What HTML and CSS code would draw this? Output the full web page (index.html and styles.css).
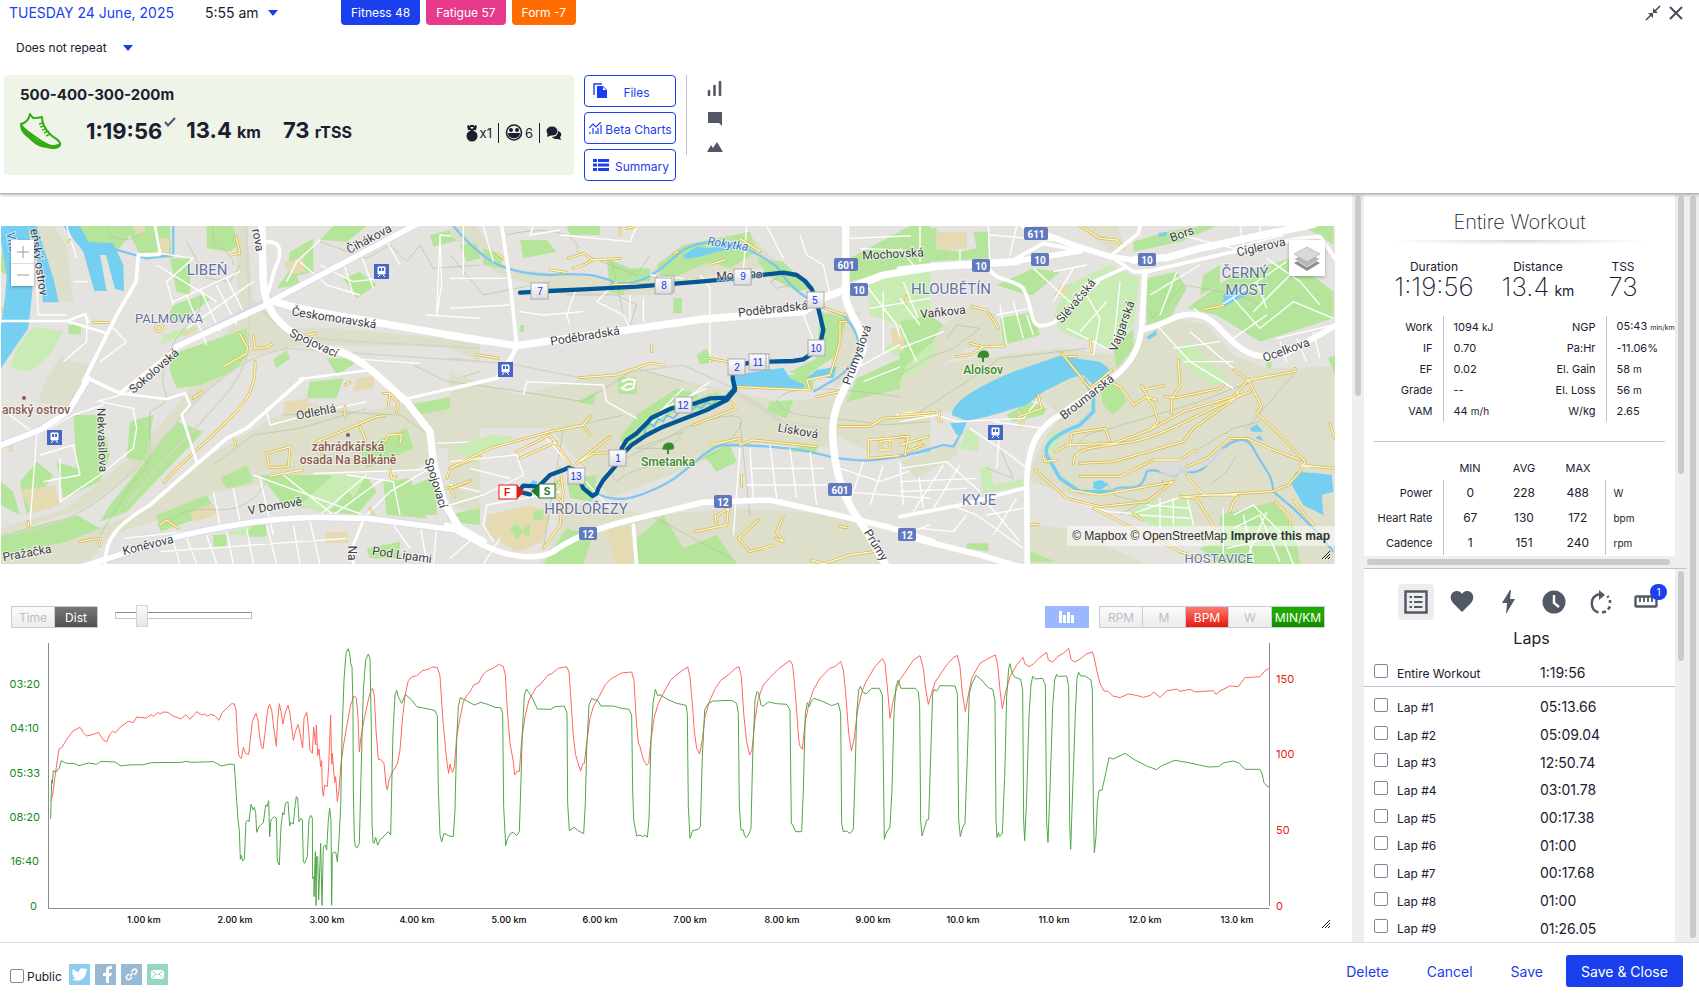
FILE: index.html
```html
<!DOCTYPE html>
<html lang="en">
<head>
  <meta charset="UTF-8" />
  <meta name="viewport" content="width=device-width, initial-scale=1" />
  <title>500-400-300-200m</title>
  <link rel="stylesheet" href="styles.css">
</head>
<body>

<header class="top">
  <div class="top-row">
    <a class="date" href="#">TUESDAY 24 June, 2025</a>
    <button class="time">5:55 am <i class="caret"></i></button>
    <div class="badges">
      <span class="badge fitness">Fitness 48</span>
      <span class="badge fatigue">Fatigue 57</span>
      <span class="badge form">Form -7</span>
    </div>
    <div class="window-buttons">
      <button aria-label="Collapse"><svg width="16" height="16" viewBox="0 0 16 16"><path d="M1 15L6 10M15 1L10 6" stroke="#4a4e5c" stroke-width="1.6"/><path d="M3 8h5v5zM8 3v5h5z" fill="#4a4e5c"/></svg></button>
      <button aria-label="Close"><svg width="14" height="14" viewBox="0 0 14 14"><path d="M1 1L13 13M13 1L1 13" stroke="#4a4e5c" stroke-width="2"/></svg></button>
    </div>
  </div>
  <button class="repeat">Does not repeat <i class="caret"></i></button>

  <div class="summary-row">
    <section class="card">
      <h1>500-400-300-200m</h1>
      <div class="card-line">
        <svg class="shoe" width="42" height="38" viewBox="0 0 42 38"><path d="M1 12C5 11 9 8 10 2l3 4c4 0 6 0 9-1 0 6 3 12 8 17 3 4 10 5 10 10-1 3-8 3-12 1C16 27 12 22 4 17 2 15 1 14 1 12z" fill="none" stroke="#34ab10" stroke-width="2" stroke-linejoin="round"/><path d="M1 11c2 4 5 5 8 9 5 6 10 10 18 12 5 2 9 1 14-1 1 6-8 7-14 5C16 35 12 29 7 25 2 21-1 17 1 11z" fill="#34ab10"/><path d="M19 12l4-1M20 15l4-1M22 18l4-1M24 21l4-2M26 24l4-2" stroke="#34ab10" stroke-width="1.4"/></svg>
        <b class="num dur">1:19:56</b>
        <svg class="tick" width="12" height="10" viewBox="0 0 12 10"><path d="M1 5L4 8.500L11 1" fill="none" stroke="#4a5568" stroke-width="2"/></svg>
        <b class="num">13.4 <small>km</small></b>
        <b class="num tss">73 <small>rTSS</small></b>
        <div class="meta">
          <span><svg width="12" height="18" viewBox="0 0 12 18"><circle cx="6" cy="12" r="5.500" fill="#1b2030"/><path d="M2 1.500L6 7L10 1.500M2 1.500L3 6M10 1.500L9 6M4 2h4" fill="none" stroke="#1b2030" stroke-width="2"/></svg>x1</span>
          <span><svg width="18" height="17" viewBox="0 0 18 17"><circle cx="9" cy="8.500" r="7.500" fill="none" stroke="#1b2030" stroke-width="1.600"/><circle cx="6" cy="6" r="2" fill="#1b2030"/><circle cx="12" cy="6" r="2" fill="#1b2030"/><path d="M3 9H15C15 16 3 16 3 9z" fill="#1b2030"/></svg> 6</span>
          <span><svg width="16" height="14" viewBox="0 0 16 14"><ellipse cx="6" cy="5" rx="5.500" ry="4.500" fill="#1b2030"/><path d="M1 11L2 6L6 9z" fill="#1b2030"/><path d="M12 5c4 1 4 5 2 6l1 3-3-1c-2 0-5 0-6-2 4 0 6-3 6-6z" fill="#1b2030"/></svg></span>
        </div>
      </div>
    </section>
    <div class="actions">
      <button><svg width="15" height="16" viewBox="0 0 15 16"><path d="M1 12V1H9" fill="none" stroke="#1a40ed" stroke-width="1.400"/><path d="M4 3h6l4 4v8H4z" fill="#1a40ed"/><path d="M10 4v3h3z" fill="#fff"/></svg><span>Files</span></button>
      <button><svg width="13" height="12" viewBox="0 0 13 12"><path d="M0 6L4 2L7 5L12 0M1 12V10M4 12V6M7 12V9M9 12V6M12 12V3" fill="none" stroke="#1a40ed" stroke-width="1.200"/></svg><span>Beta Charts</span></button>
      <button><svg width="16" height="13" viewBox="0 0 16 13"><path d="M0 0h4v3H0zM5 0h11v3H5zM0 4.500h4v3H0zM5 4.500h11v3H5zM0 9h4v3H0zM5 9h11v3H5z" fill="#1a40ed"/></svg><span>Summary</span></button>
    </div>
    <nav class="views">
      <button aria-label="Charts"><svg width="15" height="16" viewBox="0 0 15 16"><path d="M2 15V11M7.500 15V6M13 15V2" stroke="#525866" stroke-width="2.600" stroke-linecap="round"/></svg></button>
      <button aria-label="Comments"><svg width="16" height="16" viewBox="0 0 16 16"><path d="M1 1h14v14l-3-3H1z" fill="#525866"/></svg></button>
      <button aria-label="Map"><svg width="16" height="10" viewBox="0 0 16 10"><path d="M0 10L4 3L6 6L10 0L16 10z" fill="#525866"/></svg></button>
    </nav>
  </div>
</header>

<main>
  <div class="left">
    <div class="map">
      <svg class="map-art" viewBox="0 0 1334 338">
        <rect width="1334" height="338" fill="#e5e3e0"/>

        <!-- west -->
        <g transform="translate(-1 -11) scale(.33333)">
          <path class="wood" d="M180 425L265 450L215 590L115 560L140 490zM3 960L250 880L400 780L560 590L720 430L900 390L1340 395L1440 440L1440 380L1000 340L860 340L760 250L740 33H700L720 300L640 400L540 560L400 720L200 880L3 940zM600 740L900 560L1080 590L1240 560L1440 570V700L1320 700L1240 770L940 775L660 830L500 910L330 960L260 1047H3V990L260 950L420 890zM110 33H160L200 90L220 260L180 260zM1340 620L1440 560V900L1350 870z"/>
          <path class="park" d="M200 33H510L515 130L420 120L390 60L350 110L300 90L260 100zM510 130H570V240L530 230zM620 33H700L712 90L690 110L620 100zM520 270L620 235L630 255L540 320L500 315zM510 420L740 340L745 420L700 470L600 510L530 520L510 470zM205 330h38v28h-38zM220 600L300 600L330 720L300 800L190 850L170 740L230 760zM60 800L110 740L160 780L80 900zM530 620L610 650L380 890L300 920L330 870zM870 110L940 70L940 170L860 190zM1000 33L1100 33L1040 80L960 75zM1290 60L1350 45L1380 75L1300 95zM830 220L880 150L900 210zM1080 170L1130 210L1070 250L1030 190zM3 800L40 830L60 900L3 870zM3 960L230 900L300 940L200 980L3 1020zM470 900L620 840L650 890L480 950zM930 500L1030 490L1010 550L920 550zM1080 700L1220 640L1240 700L1100 760zM660 790L740 750L760 800L680 820zM780 780H1100L1130 830L1070 900L850 870zM1150 800L1230 790L1280 910L1160 900zM1220 820L1310 780V900L1240 900zM640 960h40v35h-40zM740 930h60v35h-60zM1100 1000L1200 980V1030H1110zM1230 570L1350 545L1360 580L1250 600zM390 620L460 600L440 740L380 730zM3 110L60 150L40 190L3 170zM1340 900L1440 880V930L1350 920zM820 435L860 405L870 430L830 460zM980 430L1090 430L1010 480z"/>
          <path class="grass" d="M100 335L190 350L150 420L90 470L30 460L50 400zM660 960L760 930L740 960zM480 390L600 340L580 330L490 360zM900 870L1000 780L1080 790L980 900zM1010 780L1100 780L1060 850z"/>
          <path class="field" d="M480 70H510L505 120H480zM850 145L910 125L915 170L870 180zM60 825L165 810L180 870L100 895zM545 350L590 335V350L550 365zM1070 490L1125 480L1120 520L1060 530zM855 560L925 550V590L850 590zM975 950h70v35h-70zM570 890L640 865L650 900L580 920zM400 33H435V55H405z"/>
          <path class="water" d="M3 33H85L100 150L97 230L85 340L50 390L3 460V330L15 250L20 180L3 80zM85 33L110 33L135 110L160 190L177 262H128L125 190zM190 33H240L265 80L340 85L370 150L372 228L345 222L318 120L300 120L320 228L283 228L250 110z"/>
          <path class="stream" d="M520 33V120L440 130L300 90M1360 33L1440 110"/>
          <path class="contour" d="M320 40C330 80 400 85 430 50M560 80L620 190L690 200L720 150M600 240C620 320 520 320 490 470C480 560 540 540 450 590C440 700 480 720 400 800L300 960M640 33C620 100 700 100 700 150M960 80L1100 130L1170 90L1220 140L1260 90L1300 160L1440 150M850 600L1000 590L1200 600L1290 660M640 750L760 660L900 640L1100 580M1240 450L1340 500L1440 470M500 930C600 820 700 960 800 800"/>
          <path class="rail" d="M3 960C300 930 400 760 560 590C680 460 760 420 860 400L1440 440M740 33C740 200 760 300 740 430C700 560 500 700 380 870M790 290C880 390 960 370 1440 400"/>
          <path class="minor" d="M200 33L230 130M220 200H265M110 210L115 300H200M480 115L580 130L500 200L520 270M470 150L650 260M560 240L620 390M600 220L660 350M650 210L710 330M680 190L740 310M520 260L720 170M560 340L760 200M300 440L380 380L330 330M290 560L400 530M260 310V380L190 440M3 580L110 660L220 600L310 570M110 660L90 930M180 730L180 860L300 780L400 700L410 640L400 580L300 560M120 720L220 690L240 780L130 800M860 200L890 140L960 75M900 140L980 210L1080 240M960 150L1060 200L1140 190M1030 140L1060 240M1080 110L1120 220M930 190L1020 150L1110 100M1160 80L1200 150M1320 60L1325 210L1310 300L1320 60L1440 70M1280 300L1440 310M1040 430L1260 445M800 590L810 630L960 590L1100 560M780 790L820 960M940 775L1260 765L1300 740M760 780L1090 900M850 780L1000 900M960 900L1100 780M1000 900L1150 790M1100 900L1170 830L1290 760M1040 780L1180 800L1200 900M640 830L660 930M700 820L720 920M370 970L650 940M520 980L540 1047M560 970L590 1047M620 960L650 1047M680 950L700 1047M740 940L760 1047M800 930L830 1047M880 930L900 1047M930 920L960 1047M480 1010L1040 970M1260 930L1280 1040M1310 940L1300 1047M1180 930L1230 1000M1310 685L1440 680M1350 810L1440 830"/>
          <g class="path"><path id="tracks-w" d="M690 120L720 115L708 65M280 322H325M670 455L740 415L742 395L718 355M760 365L765 400L800 398L815 388M765 440C770 520 740 560 680 620L520 770L492 803M580 550L605 530M920 360L948 355M950 680L1130 605L1155 602M1080 635L1097 675M1035 575V605M1150 535L1170 535L1195 565L1190 590M1170 535L1165 570M1155 680L1165 660L1205 658L1200 685M800 715L870 695L865 755L808 758L800 715M810 783L908 765M960 680L965 720M1035 510L1050 502M1340 790L1350 760L1440 725M1330 820L1370 815L1410 797M1350 820L1365 845M480 930L500 915L535 940M240 980L295 970L300 992M700 668L708 690M3 290V280M30 690L33 705M210 75L205 80M85 920V935M1170 765L1175 790L1188 785M1110 880L1120 898M466 340A11 11 0 1 0 466 338"/></g>
          <use class="path-in" href="#tracks-w"/>
          <g class="casing"><path d="M240 1060L420 1000L530 965C700 925 850 907 960 907L1100 910L1370 945M830 250L1250 28M3 690L120 645L205 590L265 490M530 395L820 250"/></g>
          <path class="road w-s" d="M1090 915L1060 990V1047M1225 550L1440 500M3 318H200L255 298L265 320M200 318L320 355M480 115L465 33M360 535L500 552L555 535L570 570L545 600L590 740M900 492L1110 465"/>
          <path class="road w-m" d="M478 118L415 120L408 200L350 300L250 500M315 1047C315 970 350 930 450 870L530 800L680 670L740 640L910 490M265 490L360 535L530 400M800 80C850 80 845 120 825 160L805 230"/>
          <path class="road w-l" d="M230 1060L420 1000L530 965C700 925 850 907 960 907L1100 910L1370 945M830 250L1250 28M3 690L120 645L205 590L265 490M530 395L820 260"/>
          <path class="road w-xl" d="M785 33L790 200C795 280 830 320 880 355L960 400L1020 410C1080 430 1120 470 1220 560L1290 650L1300 740L1330 860L1380 940L1450 980M820 258C900 285 1000 300 1130 322L1450 378"/>
        </g>

        <!-- centre -->
        <g transform="translate(449 -11) scale(.33333)">
          <path class="wood" d="M0 470L200 540L540 460L720 500L850 530L1000 560L1180 540L1160 700L870 680L760 740L480 850L420 780L300 640L0 640zM320 860L620 900L860 880L1200 900L1260 980L1290 1047H270L330 930zM0 33H80L170 160L560 200L700 90L900 60L990 150L780 180L620 240L350 240L150 180L0 60zM1190 520H1440V700L1290 730L1160 660zM1130 290L1230 290L1220 480L1150 520z"/>
          <path class="park" d="M210 75H290L320 110L220 130zM505 160H600V200L505 195zM100 100L155 120V160L100 150zM30 90L80 85L90 130L50 140zM350 33H450V60H360zM620 150L700 90L900 50L920 110L840 160L780 140L640 200zM920 130L1000 140L1080 220L1040 230L950 180zM1110 290L1190 310L1160 420L1060 490L1020 470L1100 430zM1200 130L1380 33H1440V160L1380 150L1200 200zM1220 490L1440 390V500L1190 560zM560 600L680 520L750 540L660 600L520 700L510 670zM690 570L800 530L830 560L720 590zM760 720L840 690L860 740L800 770zM350 790L440 780L430 860L360 850zM560 970L640 900L700 1000L800 960L860 1047H560zM380 560L440 530L430 570zM670 250h26v45h-26zM470 130L540 160L520 240L480 230zM990 480H1090V520H1000zM1020 700L1100 690V710L1020 710zM505 487h55v50h-55zM740 420L770 400L790 440L750 450zM270 830L330 790L320 830zM350 940L430 960L400 1047H280zM960 560L1030 555L1010 610L950 590zM210 330L222 330L222 350L208 350z"/>
          <path class="grass" d="M1250 200L1440 160V300L1340 330L1260 300zM1300 400L1440 310V480zM0 700L120 660L200 665L60 730z"/>
          <path class="field" d="M110 900L240 870L300 900L280 980L200 1010L110 960zM470 950L540 930L550 1047H500zM1320 340L1380 340L1370 390L1330 395z"/>
          <path class="park" d="M180 940L200 925L220 950L200 975zM220 940L240 925V960L225 965zM250 890L280 880V915H250z"/>
          <path class="water" d="M700 120L740 95L780 100L840 85L890 95L800 110L750 125L705 132zM850 480L1000 458L1020 490L1065 510L1055 525L850 515zM1070 490L1100 465L1160 455L1150 490L1110 485L1070 500zM235 810L250 795L262 800L255 815z"/>
          <path class="stream" d="M10 33C100 140 160 175 300 180C430 170 470 190 500 205C600 210 640 150 700 105C780 60 880 80 980 155C1020 220 1080 270 1180 300C1250 380 1240 430 1160 490L1090 530M430 830C500 870 560 850 640 810C720 770 760 700 820 690C1000 690 1080 710 1140 725C1260 750 1320 730 1440 705"/>
          <path class="contour" d="M0 120L100 240L300 200M170 60C330 20 400 80 380 110L560 180L600 120M350 240L500 240L560 270L540 330M480 130L500 200L520 300M0 500L150 520L400 560L560 460L700 500M280 1000L340 640L520 600M500 800C440 740 620 700 700 640C860 580 900 600 860 650C760 800 620 700 500 800M1440 560C1200 520 1000 500 980 560C1020 620 1140 600 1300 630L1440 620M960 200L1000 180L1020 210L980 220L960 200M560 700L700 650L660 700zM600 900L860 1040M870 620L900 900"/>
          <path class="rail" d="M0 430L200 450L400 490L700 450L850 520L1000 620L1110 680M850 530L990 620L1120 640"/>
          <path class="minor" d="M0 190H170M40 33V180M100 33L130 140M250 33L240 60L330 45M560 33L540 80L330 60M0 280L180 270M210 290L280 300L400 290M380 220L350 300L360 330M500 200L440 260L520 300L540 340M540 240V320M580 250V320M750 180L780 220V440M600 180L700 190M890 33L880 170M950 33L1000 130M1050 60L1070 120L1120 150L1140 240M1060 300L1100 400M1200 70L1440 60M1230 100L1440 110M1240 200L1340 330L1380 480M1260 280L1440 250M1300 230V420M1360 200L1440 400M1200 470L1440 340M1240 500L1440 420M220 540L230 500L460 510L470 560L560 610M510 690L640 600L780 500M600 620L700 520M640 580L770 520M130 980L100 930L110 870L330 830M0 740L200 720L220 780L100 840L0 870M60 760L180 790M280 660L380 770L480 880M870 700L850 960M900 700L910 850M960 690L980 850M1020 700L1040 850M1080 710L1100 870M900 760H1120M890 810H1130M1170 760L1290 800L1400 760M1240 740L1200 860M1300 750L1260 870M1350 740L1360 870M1400 740L1420 880M1180 830L1440 850M1340 600L1440 580M0 1030L80 960M100 1047L150 970M1360 960L1440 930"/>
          <g class="path"><path id="tracks-c" d="M355 130L400 115L430 135L510 130M370 160L400 150L430 135M300 165L350 172M490 208L590 208M140 115L160 130M870 70L930 110M510 60L510 40M530 40L555 35M670 115L685 110M780 148L825 135M1125 280L1190 302M1170 320L1170 380L1150 450L1140 480L1070 495L1080 525L860 515M1190 320L1170 320M780 430L830 440L860 450M390 488L500 480L600 445L640 450M605 390V410M80 418L145 430M0 760L120 700L300 650L400 630L420 605M400 630L420 660M200 710L300 660L370 760M380 745L480 665M210 730L320 680M390 740L430 715L500 712M330 760L340 830L330 930L280 1000M330 800L310 830L350 880M730 630L860 580L840 560M780 690L870 670V690L910 675L1100 695M875 780V815M735 950L830 930L835 880L795 905L800 925M865 970L925 915M865 970L900 1010L970 990M1000 905L980 950L1000 980L975 970M1100 545L1170 530M1165 635L1260 635L1300 610L1440 600M1255 675L1370 665V720L1255 730zM1290 680L1320 675V705L1290 705zM1370 710L1420 690M1085 1035L1120 1047L1200 1020L1270 1010M1170 935L1190 938M0 820L60 798"/></g>
          <use class="path-in" href="#tracks-c"/>
          <path d="M515 500L535 492L555 495L550 520L530 525L515 520L530 508L548 506" fill="none" stroke="#fff" stroke-width="6"/>
          <path d="M585 640L600 625L612 635L625 610L640 620L650 600L670 610L690 590M720 590L740 572L752 580L770 562L785 570L800 555M585 640V660" fill="none" stroke="#78bdf0" stroke-width="5"/>
          <path class="road w-m" d="M155 33L180 200L200 390L180 440M0 522L140 490L200 400M550 930L560 1047M0 900L20 950"/>
          <path class="road w-l" d="M-10 930L100 990C180 1030 260 1035 310 1010C360 975 420 945 540 915L760 862L960 855L1160 900L1310 935L1450 980"/>
          <path class="road w-xl" d="M-10 360L200 392L530 345L760 312L1060 290L1130 245L1300 180L1440 158"/>
          <path class="road w-xl" d="M1187 33V250C1200 310 1240 330 1240 400C1210 500 1150 540 1148 650C1150 760 1180 840 1210 890L1250 950L1310 1055"/>
          <path class="route" d="M210 233L297 228L400 223L560 215L750 200L880 188L950 178L1000 173L1040 180L1065 198L1085 222L1100 260L1112 310L1120 345L1112 380L1095 410L1060 433L1030 438L960 440L900 443L850 455L848 490L855 525L830 555L770 585L700 612L640 635L590 660L545 690L520 715L495 755L460 795L445 820L440 835L428 843L400 820L375 765L355 758L340 765L300 780L280 800L265 815L220 812L205 830L240 838M848 490L855 520L830 548L780 550L730 567L665 580L605 608L590 625L560 655L530 675L515 700V720"/>
        </g>

        <!-- east -->
        <g transform="translate(899 -11) scale(.33333)">
          <path class="wood" d="M0 500L160 440L480 400L640 420L720 360L830 310L920 330L1000 420L1100 460L1300 455V1047H1000L900 990L700 900L390 800L380 930L500 940L740 1047H380L370 800L430 680L480 600L420 550L280 600L150 590L0 590zM130 330L220 270L290 300L310 390L200 400L100 470L0 530V450zM0 740L180 680L170 720L50 790zM540 33H650L680 100L630 110z"/>
          <path class="park" d="M30 40L110 40V100L180 110L230 100L220 50L265 50V130L0 145V105H40zM290 210L400 160L480 170L400 240L380 240zM300 310L400 290L420 360L310 390zM740 190L830 170L860 220L810 310L740 330zM860 280L1000 180L1170 130L1300 230V310L1080 380L950 300zM910 180L960 150L960 210L900 240zM640 400L700 340L700 400L650 460zM600 520L650 500L680 560L640 600L610 570zM320 600L390 560L440 580L430 600L340 620zM960 900L1120 860L1180 930L1200 1047H960L900 1000L960 980zM0 320L90 300L130 330L60 440L0 500zM700 80L800 50L900 33H950L840 80L700 110zM1200 33L1300 33V90L1260 60zM1285 430L1305 420V480zM1100 440h14v20h-14zM390 1010L470 1040H390zM200 985H265V1010L200 1000z"/>
          <path class="grass" d="M500 210L630 150L720 190L700 330L620 400L480 350L460 300zM830 410L870 380L990 500L940 510L850 450zM180 700L200 640L235 660V710zM240 760L270 750L280 810L370 790V815L250 835zM440 660L510 640L460 700L450 720zM680 900L740 860L870 850L880 930L780 940zM20 450L110 370L90 440L0 500z"/>
          <path class="field" d="M108 50L200 50L200 100L115 105zM0 350L15 360L10 410L0 410zM480 210L510 210L500 240L460 245zM355 590L375 600V635L352 640z"/>
          <path class="water" d="M155 600C160 560 220 520 340 470L480 422L540 432L600 440L625 460L630 480L580 510L550 480L510 490L430 530L380 570L260 605L200 618zM150 625L200 622L185 660L170 660zM970 240L1010 215L1050 235L970 275zM775 55L800 50V62L778 65zM740 365L770 345V360L745 375zM1170 800L1190 770L1250 775L1295 780L1300 830L1265 840L1270 900L1210 870zM580 800L605 795L625 810L600 825L580 820zM1050 640L1070 628L1090 650L1055 650zM1065 670L1080 660L1090 678zM780 808L790 793V808zM830 780L840 755L855 770z"/>
          <path class="stream-w" d="M550 490L580 540V590L540 630C460 660 430 690 440 720L480 790L540 830L640 830"/>
          <path class="stream" d="M640 825C680 800 720 850 740 770C790 750 800 810 850 765C900 790 930 740 960 710C1000 670 1040 660 1060 700C1090 760 1120 780 1120 830L1180 880L1250 950L1300 1010M0 725L60 710L130 690L160 695L180 660"/>
          <path class="contour" d="M0 480L80 430L160 400L240 340L170 330L140 370M60 590L200 500L300 430L560 400M260 760L340 790L300 700M520 700L560 660L700 620L900 560L1000 520L1060 500M660 900L800 820L900 700L1000 640L1080 620M930 810L980 770L1010 720M1180 480L1040 640M730 270L760 310L850 210L1020 240L1080 270M620 800L640 840L800 880"/>
          <path d="M760 750L880 710L980 700L960 740L800 790z" fill="#dcdcd8" opacity=".8"/>
          <path class="minor" d="M0 100L40 150M60 33V140M180 105V150M265 33L270 150M350 33L330 120M270 60L500 80M560 150L460 170M400 160L520 270L600 200M520 160L460 260M560 240L600 310L580 420M620 260L540 350M660 200L640 400M500 340L620 400M300 270L320 390M340 260L370 370M380 300L400 360M290 300L390 280M0 400L130 350M0 250L60 330M0 330L50 440M0 620L110 600L170 620L370 610L410 560M300 640L290 760M280 620L430 640M210 640L330 720L380 760M0 760L140 740L240 830M0 800L230 790M40 890L130 750M100 880L180 750M0 830L200 820M150 870L230 900L370 1000M200 900L160 950L60 940M250 850L360 980M260 900L370 880M280 960L350 850M770 330L870 440L1000 520M870 350L1000 460M820 400L960 380M850 440L1000 440M1100 300L1000 370L880 280M1000 250L1080 340L1180 260L1300 310M1070 200L1100 280M950 280L1160 140M1060 290L1210 140M1100 130L1200 200L1260 270M750 240L900 150M780 300L830 170M840 60L1000 100L1150 60M1020 33L1030 90M1080 33V80M1130 370L1300 330M1140 380L1160 440M1190 370L1220 440M1240 350L1260 430M700 895L860 840L880 930M780 850V940M820 850V930M740 870L870 880M720 900L870 910M970 880V1040M1000 900L1060 870L1140 950L1180 1047M1000 940L1080 900L1140 1040M1030 900L1060 1040M1100 890L1040 1030M980 1000L1150 960M550 865L620 890L700 895"/>
          <g class="path"><path id="tracks-e" d="M215 275L260 285L295 340M170 425L215 418L250 395L315 393M210 385L250 395M570 375L575 410M485 415L570 520L635 465M505 425L530 425M640 505L665 520L700 570L740 545L760 570L775 620L750 645M725 510L750 560M730 525L790 512M740 545L770 555M835 435L840 515L815 550V595M795 545L830 548L960 520L970 510M465 710L500 690L640 685L750 645L850 590L1000 545L1045 495M520 745C520 700 560 700 700 680C800 660 900 590 1050 530M540 745L640 740L850 680L880 640L1020 540M510 690L515 655L615 640L630 680M1000 465L1045 495L1185 470V460M1045 495L1085 575L1070 595L1110 630L1150 670L1215 740L1200 770L1165 810L1115 830L850 845M1015 530V545M860 755L920 730L990 670L1040 670L1120 705L1200 735M1200 750L1305 760M540 785L660 785L760 735L840 735L885 705M510 825L600 840L820 800M405 765L500 850L600 875L740 860L820 800M580 880L840 1010L960 1047M0 600L105 593M120 590L115 615L125 620M0 665L25 665L15 720M0 690L85 665M60 680V695M355 605L425 580L415 540M385 928H415M840 845L890 850L945 940M860 780L910 840H1010M990 890L1000 860L1015 845M1125 860L1170 905V935M1180 855L1240 930M910 283L970 272M540 33L600 70L650 75L670 100M430 725L435 740L470 735M700 895L725 915M1290 625L1305 670M18 245V265"/></g>
          <use class="path-in" href="#tracks-e"/>
          <path class="road w-m" d="M270 165C290 200 340 190 370 220C400 280 390 330 420 332C470 330 470 310 500 290L560 210L670 160M630 125L715 55L720 33M635 125L700 170H740L1000 110L1200 70L1260 65L1305 130M340 135L430 85L530 105M0 905L180 870L370 820"/>
          <path class="road w-l" d="M735 170L725 340C715 420 670 470 620 500L480 600C410 640 385 690 380 800L382 1050M725 345C800 330 820 295 880 298C940 300 960 350 1010 390C1060 430 1100 430 1160 415L1230 375L1310 330M0 945L60 975L240 1020L360 1055"/>
          <path class="road w-l" d="M340 140L540 108M370 33L520 90L630 125L700 135"/>
          <path class="road w-xl" d="M0 165L100 155L350 140M700 135L800 128L900 100L1240 28"/>
        </g>

        <g class="street">
          <text transform="translate(153 145) rotate(-41)">Sokolovská</text>
          <text transform="translate(333 92) rotate(9)">Českomoravská</text>
          <text transform="translate(313 117) rotate(25)">Spojovací</text>
          <text transform="translate(368 13) rotate(-28)">Čihákova</text>
          <text transform="translate(257 14) rotate(80)">rova</text>
          <text transform="translate(38 36) rotate(82)">eňský ostrov</text>
          <text transform="translate(101 214) rotate(88)">Nekvasilova</text>
          <text transform="translate(315 186) rotate(-11)">Odlehlá</text>
          <text transform="translate(274 280) rotate(-10)">V Domově</text>
          <text transform="translate(435 257) rotate(73)">Spojovací</text>
          <text transform="translate(147 319) rotate(-14)">Koněvova</text>
          <text transform="translate(26 327) rotate(-10)">Pražačka</text>
          <text transform="translate(351 327) rotate(90)">Na</text>
          <text transform="translate(401 329) rotate(8)">Pod Lipami</text>
          <text transform="translate(892 28) rotate(-3)">Mochovská</text>
          <text transform="translate(724 50) rotate(-4)">Mo</text>
          <text transform="translate(755 48) rotate(4)">no</text>
          <text transform="translate(772 83) rotate(-6)">Poděbradská</text>
          <text transform="translate(584 110) rotate(-9)">Poděbradská</text>
          <text transform="translate(856 129) rotate(-70)">Průmyslová</text>
          <text transform="translate(797 205) rotate(10)">Lísková</text>
          <text transform="translate(875 319) rotate(58)">Průmy</text>
          <text transform="translate(942 86) rotate(-6)">Vaňkova</text>
          <text transform="translate(1075 75) rotate(-50)">Slévačská</text>
          <text transform="translate(1121 100) rotate(-70)">Vajgarská</text>
          <text transform="translate(1086 171) rotate(-38)">Broumarská</text>
          <text transform="translate(1181 8) rotate(-20)">Bors</text>
          <text transform="translate(1260 21) rotate(-13)">Cíglerova</text>
          <text transform="translate(1285 124) rotate(-20)">Ocelkova</text>
        </g>
        <g class="district">
          <text x="206" y="44">LIBEŇ</text>
          <text x="168" y="92" class="small">PALMOVKA</text>
          <text x="585" y="283">HRDLOŘEZY</text>
          <text x="950" y="63">HLOUBĚTÍN</text>
          <text x="1244" y="47">ČERNÝ</text>
          <text x="1245" y="64">MOST</text>
          <text x="978" y="274">KYJE</text>
          <text x="1218" y="332" class="small">HOSTAVICE</text>
        </g>
        <g class="place">
          <text x="35" y="184">anský ostrov</text>
          <text x="347" y="221">zahrádkářská</text>
          <text x="347" y="234">osada Na Balkáně</text>
          <circle cx="23" cy="172" r="2"/><circle cx="347" cy="209" r="2"/>
        </g>
        <g class="nature">
          <text x="667" y="236">Smetanka</text>
          <text x="982" y="144">Aloisov</text>
          <path d="M662 221c0-5 11-7 11 0 1 3-3 3-5 3v4h-2v-4c-3 0-6 0-4-3zM977 129c0-5 11-7 11 0 1 3-3 3-5 3v4h-2v-4c-3 0-6 0-4-3z"/>
        </g>
        <g class="river">
          <text transform="translate(727 18) rotate(8)">Rokytka</text>
          <text transform="translate(11 16) rotate(80)">Vlta</text>
        </g>

        <g class="shield">
          <rect x="833" y="32" width="24" height="13" rx="2"/><text x="845" y="39">601</text>
          <rect x="849" y="57" width="18" height="13" rx="2"/><text x="858" y="64">10</text>
          <rect x="827" y="257" width="24" height="13" rx="2"/><text x="839" y="264">601</text>
          <rect x="713" y="269" width="18" height="13" rx="2"/><text x="722" y="276">12</text>
          <rect x="578" y="301" width="18" height="13" rx="2"/><text x="587" y="308">12</text>
          <rect x="897" y="302" width="18" height="13" rx="2"/><text x="906" y="309">12</text>
          <rect x="1023" y="1" width="24" height="13" rx="2"/><text x="1035" y="8">611</text>
          <rect x="971" y="33" width="18" height="13" rx="2"/><text x="980" y="40">10</text>
          <rect x="1030" y="27" width="18" height="13" rx="2"/><text x="1039" y="34">10</text>
          <rect x="1137" y="27" width="18" height="13" rx="2"/><text x="1146" y="34">10</text>
        </g>

        <defs>
          <g id="station"><rect x="-7" y="-7" width="15" height="15" fill="#4765c4"/><path d="M-3 -4H4V3H-3zM-1 4L-3 6M2 4L4 6" fill="#fff" stroke="#fff"/><path d="M-2 -3H0V0H-2zM1 -3H3V0H1z" fill="#4765c4"/></g>
          <linearGradient id="face" x2="0" y2="1"><stop offset="0" stop-color="#fff"/><stop offset="1" stop-color="#dcdcdc"/></linearGradient>
          <rect id="pin" x="-8" y="-8" width="17" height="16" fill="url(#face)" stroke="#a9a9a9"/>
        </defs>
        <use href="#station" x="380" y="45"/><use href="#station" x="53" y="211"/>
        <use href="#station" x="504" y="143"/><use href="#station" x="994" y="206"/>

        <g class="pins">
          <use href="#pin" x="664" y="58"/><use href="#pin" x="759" y="136"/>
          <use href="#pin" x="538" y="65"/><text x="539" y="65">7</text>
          <use href="#pin" x="662" y="60"/><text x="663" y="59">8</text>
          <use href="#pin" x="741" y="51"/><text x="742" y="50">9</text>
          <use href="#pin" x="814" y="74"/><text x="814" y="74">5</text>
          <use href="#pin" x="815" y="122"/><text x="815" y="122">10</text>
          <use href="#pin" x="756" y="136"/><text x="757" y="136">11</text>
          <use href="#pin" x="735" y="141"/><text x="736" y="141">2</text>
          <use href="#pin" x="682" y="179"/><text x="682" y="179">12</text>
          <use href="#pin" x="616" y="232"/><text x="617" y="232">1</text>
          <use href="#pin" x="575" y="250"/><text x="575" y="250">13</text>
        </g>
        <g class="ends">
          <path d="M516 259L523 266L516 273z" fill="#e8190c"/><rect x="498" y="259" width="18" height="14" fill="#fff" stroke="#e8190c"/><text x="506" y="266" fill="#e8190c">F</text>
          <path d="M538 259L530 265L538 272z" fill="#1f7a2c"/><rect x="538" y="258" width="16" height="14" fill="#fff" stroke="#1f7a2c"/><text x="546" y="265" fill="#1f7a2c">S</text>
        </g>
      </svg>

      <div class="zoom">
        <button aria-label="Zoom in"><svg width="12" height="12" viewBox="0 0 12 12"><path d="M0 6H12M6 0V12" stroke="#999"/></svg></button>
        <button aria-label="Zoom out"><svg width="12" height="12" viewBox="0 0 12 12"><path d="M0 6H12" stroke="#999"/></svg></button>
      </div>
      <button class="layers" aria-label="Layers"><svg width="28" height="26" viewBox="0 0 28 26"><path d="M1 17L14 10L27 17L14 25z" fill="#8b8f94"/><path d="M1 13L14 6L27 13L14 21z" fill="#b4b7ba" stroke="#fff" stroke-width=".6"/><path d="M1 8L14 1L27 8L14 16z" fill="#d9dad8" stroke="#a6a9ab" stroke-width=".6"/></svg></button>
      <div class="credit"><a href="#">© Mapbox</a> <a href="#">© OpenStreetMap</a> <a href="#"><b>Improve this map</b></a></div>
      <svg class="grip" width="8" height="8" viewBox="0 0 8 8"><path d="M0 8L8 0M3 8L8 3M6 8L8 6" stroke="#222"/></svg>
    </div>

    <div class="chart-bar">
      <div class="switch"><button>Time</button><button class="dist">Dist</button></div>
      <input class="smooth" type="range" min="0" max="100" value="16" aria-label="Smoothing">
      <button class="bars" aria-label="Zones"><svg width="16" height="12" viewBox="0 0 16 12"><path d="M0 0h3v12H0zM4 4h3v8H4zM8 1h3v11H8zM12 4h3v8h-3z" fill="#fff"/></svg></button>
      <div class="switch series"><button>RPM</button><button>M</button><button class="bpm">BPM</button><button>W</button><button class="pace">MIN/KM</button></div>
    </div>

    <div class="chart">
      <svg class="chart-art" viewBox="0 0 1334 300">
        <g transform="translate(-1 -45) scale(.33333)">
          <path class="hr" d="M152 633L158 615L165 560L172 510L177 477L186 472L200 448L220 422L240 412L250 428L260 438L280 433L296 427L308 448L320 456L330 432L338 424L346 428L360 412L385 394L400 398L410 381L440 384L452 374L460 379L474 367L480 372L490 366L504 367L515 376L543 387L557 374L570 388L590 365L605 375L613 372L622 378L632 373L645 377L656 391L667 368L680 355L695 341L703 342L708 360L712 440L716 495L721 503L724 506L730 472L736 490L746 493L752 440L757 395L768 370L774 390L779 440L784 468L789 476L795 430L803 360L809 343L815 360L821 410L829 469L832 400L838 341L843 365L849 402L855 370L864 346L870 370L875 410L880 451L886 425L894 403L900 430L908 474L912 385L920 367L925 410L930 480L937 490L941 411L944 440L947 465L949 405L953 497L957 477L962 530L965 512L967 597L970 619L974 585L982 590L986 530L992 376L995 523L997 490L1001 540L1004 577L1007 560L1012 635L1017 600L1023 520L1030 470L1040 410L1052 345L1062 318L1069 324L1074 380L1078 486L1083 440L1092 390L1105 330L1113 300L1118 295L1123 320L1128 420L1135 508L1142 508L1152 520L1158 585L1162 600L1167 570L1178 545L1192 522L1200 480L1208 380L1215 320L1224 275L1235 261L1250 257L1268 242L1290 236L1295 231"/>
          <path class="speed" d="M152 687L155 570L157 580L160 542L168 546L178 534L184 512L200 520L222 520L237 527L265 519L290 523L302 514L345 516L363 528L385 525L430 524L455 518L545 517L558 514L575 517L640 515L665 528L690 522L703 524L708 600L714 690L718 720L721 808L724 795L728 813L733 808L738 695L744 690L747 695L753 643L760 660L763 652L767 668L770 727L777 710L790 698L797 645L801 650L806 632L809 740L813 690L823 680L829 684L832 815L838 825L843 710L848 668L852 675L856 640L864 635L869 708L872 697L880 702L886 640L889 620L893 624L897 695L903 685L907 690L910 815L914 820L922 800L927 690L932 676L937 684L938 866L942 860L942 920L946 785L948 946L950 800L953 800L956 930L962 760L966 946L970 770L976 765L980 780L985 690L989 655L993 690L995 946L997 790L1004 785L1008 790L1012 815L1017 750L1022 650L1026 440L1032 270L1038 190L1044 176L1049 190L1052 220L1056 230L1059 350L1060 600L1063 745L1066 770L1072 773L1078 760L1083 560L1090 300L1097 210L1105 192L1110 205L1114 420L1116 700L1119 757L1122 760L1127 742L1133 766L1140 750L1165 725L1172 735L1175 600L1179 430L1185 315L1190 301L1195 320L1205 340L1216 313L1235 330L1250 350L1270 354L1290 358"/>
        </g>
        <g transform="translate(429 -45) scale(.33333)">
          <path class="hr" d="M5 231L22 232L30 258L38 380L47 480L52 525L56 550L60 522L64 538L68 547L73 530L80 440L90 385L100 335L110 316L120 305L132 284L146 279L158 255L170 243L190 234L208 223L220 230L226 255L232 360L240 460L250 515L254 555L262 543L268 545L275 450L285 380L297 330L320 290L330 285L353 256L365 251L385 235L410 230L417 245L423 330L430 440L437 495L446 525L452 543L458 522L463 520L470 460L480 385L490 350L510 315L527 282L545 265L575 249L605 246L612 270L618 380L625 460L630 470L640 508L650 526L656 520L663 450L673 380L685 340L700 310L722 270L745 250L773 231L780 260L787 340L793 425L800 475L809 492L817 450L825 380L840 330L856 295L872 271L895 255L915 236L927 230L934 260L942 380L950 455L959 495L966 480L975 390L985 325L1000 285L1020 262L1050 233L1080 211L1088 225L1096 310L1104 420L1108 465L1117 478L1125 400L1137 340L1150 300L1170 265L1200 235L1215 230L1232 214L1240 240L1248 320L1256 430L1264 482L1272 450L1283 360L1296 305L1308 275L1335 230L1357 206L1365 220L1372 290L1380 385"/>
          <path class="speed" d="M0 358L15 362L22 378L25 600L30 735L35 755L42 730L55 737L70 740L75 660L80 450L85 350L91 323L105 330L133 345L152 337L170 342L195 352L212 353L218 370L221 650L227 767L233 745L242 730L250 727L260 737L268 725L272 600L277 430L283 315L289 297L297 308L310 330L322 357L362 358L375 350L403 348L411 370L413 640L418 722L432 712L445 722L461 731L466 640L470 480L477 345L485 326L503 332L513 348L550 348L575 355L597 358L605 375L608 600L611 690L620 738L630 735L638 740L645 735L652 742L657 690L663 450L669 340L676 298L683 317L690 314L710 327L740 340L768 346L772 370L775 650L780 745L788 722L805 718L811 710L817 500L824 360L835 340L850 333L905 331L920 340L925 370L928 650L933 720L940 720L943 735L949 743L957 732L963 715L968 500L975 330L981 305L986 308L993 345L1000 348L1015 336L1040 341L1070 343L1080 360L1084 700L1090 708L1097 725L1115 725L1120 600L1126 370L1132 338L1138 350L1144 333L1152 325L1175 333L1205 347L1225 340L1232 370L1235 700L1240 725L1250 723L1260 731L1270 718L1275 560L1280 370L1286 300L1291 289L1300 308L1310 311L1325 295L1348 295L1357 315"/>
        </g>
        <g transform="translate(879 -45) scale(.33333)">
          <path class="hr" d="M30 385L40 330L50 295L62 265L75 248L100 210L120 197L130 235L136 290L145 343L158 300L165 277L200 225L220 203L232 196L240 230L247 310L256 364L265 315L275 265L300 220L325 205L346 195L353 225L360 300L367 356L376 310L390 260L410 225L429 202L435 222L447 230L460 222L480 202L500 187L505 210L518 216L535 198L550 190L566 175L573 208L583 216L600 208L618 192L637 186L642 200L650 240L660 280L672 303L685 305L698 318L720 323L745 312L770 316L790 322L812 316L821 306L840 322L860 303L890 297L900 304L930 298L945 306L1000 302L1008 313L1020 303L1050 288L1075 290L1095 263L1140 260L1155 242L1168 235"/>
          <path class="speed" d="M7 315L11 600L13 748L18 730L30 710L36 600L42 370L48 290L54 271L63 295L105 295L115 305L119 350L122 690L126 738L135 708L140 690L146 688L152 500L158 310L163 297L169 304L180 287L225 288L232 310L236 690L241 740L248 712L255 700L262 500L268 310L276 280L288 256L305 270L325 293L338 298L345 330L348 690L351 743L355 728L359 740L367 730L374 560L380 320L386 235L390 221L396 248L405 262L422 268L428 300L431 690L434 752L439 650L447 380L453 285L458 259L465 267L488 265L496 285L500 700L504 757L510 600L518 350L524 270L530 253L535 259L560 258L566 290L569 700L572 778L578 600L586 370L591 265L596 247L602 258L615 258L633 270L637 300L640 650L643 788L648 740L652 640L657 602L666 600L675 560L687 503L700 507L735 490L765 510L800 528L830 539L845 527L885 511L930 519L985 531L1015 530L1030 519L1060 513L1078 520L1095 538L1140 538L1146 550L1152 578L1162 590L1168 590"/>
        </g>
        <path class="axis" d="M47.500 8V273.500H1268.500M1268.500 8V271"/>
        <g class="y-pace">
          <text x="39" y="49">03:20</text><text x="38" y="93">04:10</text><text x="39" y="138">05:33</text>
          <text x="39" y="182">08:20</text><text x="38" y="226">16:40</text><text x="36" y="271">0</text>
        </g>
        <g class="y-hr">
          <text x="1275" y="44">150</text><text x="1275" y="119">100</text><text x="1275" y="195">50</text><text x="1275" y="271">0</text>
        </g>
        <g class="x-km">
          <text x="143" y="284">1.00 km</text><text x="234" y="284">2.00 km</text><text x="326" y="284">3.00 km</text>
          <text x="416" y="284">4.00 km</text><text x="508" y="284">5.00 km</text><text x="599" y="284">6.00 km</text>
          <text x="689" y="284">7.00 km</text><text x="781" y="284">8.00 km</text><text x="872" y="284">9.00 km</text>
          <text x="962" y="284">10.0 km</text><text x="1053" y="284">11.0 km</text><text x="1144" y="284">12.0 km</text>
          <text x="1236" y="284">13.0 km</text>
        </g>
      </svg>
      <svg class="grip" width="8" height="8" viewBox="0 0 8 8"><path d="M0 8L8 0M3 8L8 3M6 8L8 6" stroke="#222"/></svg>
    </div>
  </div>

  <div class="bar"><i class="thumb t-main"></i></div>

  <aside>
    <div class="pane stats-pane">
      <div class="stats">
        <h2>Entire Workout</h2>
        <div class="totals">
          <div><span>Duration</span><strong>1:19:56</strong></div>
          <div><span>Distance</span><strong>13.4<small>km</small></strong></div>
          <div><span>TSS</span><strong>73</strong></div>
        </div>
        <table class="facts">
          <tr><th>Work</th><td>1094 <small>kJ</small></td><th>NGP</th><td>05:43 <small class="tiny">min/km</small></td></tr>
          <tr><th>IF</th><td>0.70</td><th>Pa:Hr</th><td>-11.06%</td></tr>
          <tr><th>EF</th><td>0.02</td><th>El. Gain</th><td>58 <small>m</small></td></tr>
          <tr><th>Grade</th><td>--</td><th>El. Loss</th><td>56 <small>m</small></td></tr>
          <tr><th>VAM</th><td>44 <small>m/h</small></td><th>W/kg</th><td>2.65</td></tr>
        </table>
        <hr>
        <table class="ranges">
          <thead><tr><td></td><th>MIN</th><th>AVG</th><th>MAX</th><td></td></tr></thead>
          <tbody>
            <tr><th>Power</th><td>0</td><td>228</td><td>488</td><td>W</td></tr>
            <tr><th>Heart Rate</th><td>67</td><td>130</td><td>172</td><td>bpm</td></tr>
            <tr><th>Cadence</th><td>1</td><td>151</td><td>240</td><td>rpm</td></tr>
          </tbody>
        </table>
      </div>
      <div class="bar"><i class="thumb t-stats"></i></div>
    </div>
    <div class="bar-h"><i class="thumb"></i></div>

    <div class="pane laps-pane">
      <div class="laps">
        <div class="tabs">
          <button class="on" aria-label="Laps"><svg width="24" height="24" viewBox="0 0 24 24"><path d="M1.500 1.500h21v21h-21z" fill="none" stroke="#525866" stroke-width="2.500"/><path d="M5.500 7h2.500M10 7h8.500M5.500 12h2.500M10 12h8.500M5.500 17h2.500M10 17h8.500" stroke="#525866" stroke-width="2.200"/></svg></button>
          <button aria-label="Heart rate"><svg width="24" height="24" viewBox="0 0 24 24"><path d="M12 22L3 13C-2 7 2 1 7 1c2 0 4 1 5 3 1-2 3-3 5-3 5 0 9 6 4 12z" fill="#525866"/></svg></button>
          <button aria-label="Power"><svg width="24" height="24" viewBox="0 0 24 24"><path d="M14 0L6 13h5L10 24L19 9h-5l1-9z" fill="#525866"/></svg></button>
          <button aria-label="Pace"><svg width="24" height="24" viewBox="0 0 24 24"><circle cx="12" cy="12" r="11.500" fill="#525866"/><path d="M12 5v8l5 4" fill="none" stroke="#fff" stroke-width="2.400"/></svg></button>
          <button aria-label="Cadence"><svg width="24" height="24" viewBox="0 0 24 24"><path d="M10.500 22.500A9.500 9.500 0 0 1 10 4.500h3M14 22.500l4-1M20 19.500l2-3M22 13V10M20.500 7.500l-1-1.500" fill="none" stroke="#525866" stroke-width="2.500"/><path d="M11 0L17 5L11 10z" fill="#525866"/></svg></button>
          <button aria-label="Elevation"><svg width="24" height="24" viewBox="0 0 24 24"><rect x="1.500" y="6.500" width="21" height="10" rx="1" fill="none" stroke="#525866" stroke-width="2.400"/><path d="M6 7v5M10 7v5M14 7v5M18 7v5" stroke="#525866" stroke-width="1.800"/></svg><span class="count">1</span></button>
        </div>
        <h3>Laps</h3>
        <div class="lap whole"><label><input type="checkbox"> <span>Entire Workout</span></label><span>1:19:56</span></div>
        <div class="lap-list">
          <div class="lap"><label><input type="checkbox"> <span>Lap #1</span></label><span>05:13.66</span></div>
          <div class="lap"><label><input type="checkbox"> <span>Lap #2</span></label><span>05:09.04</span></div>
          <div class="lap"><label><input type="checkbox"> <span>Lap #3</span></label><span>12:50.74</span></div>
          <div class="lap"><label><input type="checkbox"> <span>Lap #4</span></label><span>03:01.78</span></div>
          <div class="lap"><label><input type="checkbox"> <span>Lap #5</span></label><span>00:17.38</span></div>
          <div class="lap"><label><input type="checkbox"> <span>Lap #6</span></label><span>01:00</span></div>
          <div class="lap"><label><input type="checkbox"> <span>Lap #7</span></label><span>00:17.68</span></div>
          <div class="lap"><label><input type="checkbox"> <span>Lap #8</span></label><span>01:00</span></div>
          <div class="lap"><label><input type="checkbox"> <span>Lap #9</span></label><span>01:26.05</span></div>
        </div>
      </div>
      <div class="bar"><i class="thumb t-laps"></i></div>
    </div>
  </aside>

  <div class="bar"><i class="thumb t-page"></i></div>
</main>

<footer>
  <label class="public"><input type="checkbox"> <span>Public</span></label>
  <div class="share">
    <a href="#" class="tw" aria-label="Twitter"><svg width="15" height="13" viewBox="0 0 15 13"><path d="M0 11c2 0 3 0 4-1-2 0-2-1-3-2h1C1 7 0 6 0 5h1C0 4 0 2 1 1c2 2 4 3 6 3 0-3 3-5 6-3l2-1-1 2h1l-1 2c0 7-8 11-14 7z" fill="#fff"/></svg></a>
    <a href="#" class="fb" aria-label="Facebook"><svg width="15" height="17" viewBox="0 0 15 17"><path d="M8 17V10H5V7h3V4c0-3 2-4 6-4v3c-2 0-3 0-3 2v2h3l-1 3h-2v7z" fill="#fff"/></svg></a>
    <a href="#" class="ln" aria-label="Link"><svg width="13" height="13" viewBox="0 0 13 13"><path d="M5 8L8 5M6 4l2-2c2-2 5 0 3 3L9 7M4 6L2 8c-2 2 1 5 3 3l2-2" fill="none" stroke="#fff" stroke-width="1.600"/></svg></a>
    <a href="#" class="ml" aria-label="Email"><svg width="13" height="9" viewBox="0 0 13 9"><path d="M0 0h13v9H0z" fill="#fff"/><path d="M0 0l6.500 5L13 0M0 9l5-5M13 9L8 4" fill="none" stroke="#97d6c4"/></svg></a>
  </div>
  <div class="footer-buttons">
    <button>Delete</button>
    <button>Cancel</button>
    <button>Save</button>
    <button class="primary">Save &amp; Close</button>
  </div>
</footer>

</body>
</html>
```

FILE: styles.css
```css
* { box-sizing: border-box; }
body {
  margin: 0;
  height: 100vh;
  display: flex;
  flex-direction: column;
  font-family: Inter, sans-serif;
  font-size: 12px;
  color: #1b2030;
  background: #fff;
  overflow: hidden;
}
button {
  font-family: inherit;
  font-size: inherit;
  color: inherit;
  background: none;
  border: none;
  padding: 0;
  cursor: pointer;
}
a { color: inherit; text-decoration: none; }
h1, h2, h3 { margin: 0; }
svg { display: block; flex: none; }
input[type=checkbox] {
  appearance: none;
  width: 14px;
  height: 14px;
  margin: 0;
  flex: none;
  border: 1px solid #85859a;
  border-radius: 2px;
  background: #fff;
}

/* header */
.top {
  position: relative;
  z-index: 2;
  padding: 0 4px 12px;
  border-bottom: 1px solid #b4b6ba;
  box-shadow: 0 1px 3px rgba(0,0,0,0.3);
}
.top-row {
  display: flex;
  align-items: center;
  height: 25px;
  font-size: 14px;
  padding-left: 5px;
}
.date { color: #1a40ed; width: 196px; }
.time {
  display: flex;
  align-items: center;
  gap: 9px;
  width: 136px;
}
.caret {
  border: 5px solid transparent;
  border-top: 6px solid #1a40ed;
  border-bottom: 0;
}
.badges { display: flex; gap: 6px; }
.badge {
  font-size: 12px;
  line-height: 25px;
  padding: 0 10px;
  border-radius: 0 0 4px 4px;
  color: #fff;
}
.fitness { background: #1a40ed; }
.fatigue { background: #e83a8a; }
.form { background: #ff6d00; }
.window-buttons {
  display: flex;
  align-items: center;
  gap: 8px;
  margin-left: auto;
  margin-right: 12px;
}
.repeat {
  display: flex;
  align-items: center;
  gap: 16px;
  height: 45px;
  margin-bottom: 5px;
  padding-left: 12px;
}
.summary-row { display: flex; align-items: flex-start; }
.card {
  width: 570px;
  height: 100px;
  padding: 10px 16px;
  background: #eff4e9;
  border-radius: 4px;
}
.card h1 { font-size: 15px; line-height: 20px; }
.card-line {
  display: flex;
  align-items: center;
  margin-top: 7px;
}
.num {
  font-size: 22px;
  line-height: 32px;
  white-space: nowrap;
}
.num small { font-size: 16px; }
.dur { margin-left: 24px; }
.tick { margin: 0 10px 18px 2px; }
.tss { margin-left: 22px; }
.meta {
  display: flex;
  align-items: center;
  margin-left: auto;
  margin-right: -10px;
  padding-top: 3px;
  font-size: 13px;
}
.meta span {
  display: flex;
  align-items: center;
  gap: 2px;
  height: 20px;
  padding: 0 6px;
  border-left: 1px solid #1b2030;
}
.meta span:first-child { border: none; }
.actions {
  display: flex;
  flex-direction: column;
  gap: 5px;
  margin-left: 10px;
}
.actions button {
  display: flex;
  align-items: center;
  width: 92px;
  height: 32px;
  padding-left: 8px;
  border: 1px solid #1a40ed;
  border-radius: 4px;
  font-size: 12px;
  color: #1a40ed;
  white-space: nowrap;
}
.actions button:nth-child(2) { padding-left: 4px; }
.actions button:first-child { padding-right: 10px; }
.actions span { flex: 1; padding-top: 3px; text-align: center; }
.views {
  display: flex;
  flex-direction: column;
  gap: 15px;
  height: 80px;
  margin-left: 10px;
  padding: 5px 0 0 20px;
  border-left: 1px solid #bcc4d4;
}

main { flex: 1; display: flex; min-height: 0; }
.left {
  flex: 1;
  min-width: 0;
  padding: 32px 17px 0 1px;
}
.bar {
  flex: none;
  width: 12px;
  padding: 2px 3px;
  background: #efefef;
}
.thumb {
  display: block;
  border-radius: 3px;
  background: #cbcbcb;
}
.t-main { height: 200px; }
.t-page { height: 742px; }
.t-stats { height: 278px; }
.t-laps { height: 90px; }
.bar-h {
  height: 13px;
  padding: 3px 17px 4px 3px;
  background: #efefef;
  border-bottom: 1px solid #bcc4d4;
}
.bar-h .thumb { height: 6px; }

/* map */
.map, .chart { position: relative; }
.map-art, .chart-art { width: 100%; height: auto; overflow: hidden; }
.wood { fill: #dddfca; }
.park { fill: #b5e59b; }
.grass { fill: #c9ecb4; }
.field { fill: #e5dab2; }
.water { fill: #75cff0; }
.map-art path { stroke-linejoin: round; }
.stream, .stream-w { fill: none; stroke: #7fc6f0; stroke-width: 7; }
.stream-w { stroke-width: 11; stroke: #75cff0; }
.contour { fill: none; stroke: #b4bf9c; stroke-width: 2; }
.rail { fill: none; stroke: #d5d6c8; stroke-width: 5; }
.minor { fill: none; stroke: #fff; stroke-width: 4; }
.path, .path-in { fill: none; stroke-linecap: round; }
.path { stroke: #d5b53c; stroke-width: 8; }
.path-in { stroke: #fdf6d4; stroke-width: 4; }
.road { fill: none; stroke: #fff; stroke-linecap: round; }
.casing path { fill: none; stroke: #d6d8ea; stroke-width: 22; }
.w-s { stroke-width: 8; }
.w-m { stroke-width: 11; }
.w-l { stroke-width: 17; }
.w-xl { stroke-width: 22; }
.route { fill: none; stroke: #035796; stroke-width: 13; stroke-linecap: round; }
.map-art text {
  font-family: Roboto, sans-serif;
  font-size: 12px;
  text-anchor: middle;
  dominant-baseline: central;
}
.street text, .district text, .place text, .nature text, .river text {
  paint-order: stroke;
  stroke: rgba(255,255,255,0.6);
  stroke-width: 2px;
}
.street text { fill: #3d3d45; }
.map-art .district text { fill: #6672a4; font-size: 15px; }
.map-art .district .small { font-size: 13px; }
.place { fill: #8a5a52; }
.nature { fill: #3a8b2c; }
.nature text, .place text { font-weight: 500; }
.river { fill: #3b72c9; font-style: italic; }
.shield rect { fill: #6079bf; }
.map-art .shield text { fill: #fff; font-size: 10px; font-weight: 700; }
.map-art .pins text { font-family: "Liberation Sans", sans-serif; font-size: 10px; fill: #1a32ed; }
.map-art .ends text { font-family: "Liberation Sans", sans-serif; font-size: 10px; font-weight: 700; }
.zoom {
  position: absolute;
  left: 10px;
  top: 14px;
  background: #fff;
  box-shadow: 0 1px 3px rgba(0,0,0,0.3);
}
.zoom button {
  display: flex;
  align-items: center;
  justify-content: center;
  width: 23px;
  height: 23px;
}
.zoom button + button { border-top: 1px solid #ddd; }
.layers {
  position: absolute;
  right: 10px;
  top: 14px;
  width: 36px;
  height: 36px;
  padding: 6px 4px 4px;
  background: #fff;
  box-shadow: 0 1px 3px rgba(0,0,0,0.3);
}
.credit {
  position: absolute;
  right: 0;
  bottom: 18px;
  padding: 0 5px;
  line-height: 20px;
  background: rgba(255,255,255,0.5);
  font-family: "Liberation Sans", sans-serif;
  color: #333;
}
.grip { position: absolute; right: 5px; bottom: 5px; }
.chart .grip { bottom: 7px; }

/* chart */
.chart-bar {
  display: flex;
  align-items: center;
  height: 22px;
  margin: 42px 10px 7px;
}
.switch { display: flex; }
.switch button {
  width: 44px;
  height: 22px;
  margin-right: -1px;
  border: 1px solid #c8ccd8;
  background: linear-gradient(#fbfbfb, #ececec);
  color: #b9bfcb;
}
.switch .dist { background: linear-gradient(#787878, #525252); color: #fff; }
.switch .bpm { background: linear-gradient(#fb7b70, #e8190c); color: #fff; }
.switch .pace { width: 54px; margin: 0; background: linear-gradient(#21a800 40%, #128a00); color: #fff; }
.smooth {
  appearance: none;
  width: 137px;
  height: 22px;
  margin: -4px 0 0 18px;
  background: none;
}
.smooth::-webkit-slider-runnable-track {
  height: 7px;
  border: 1px solid #c4c4c4;
  border-top-color: #8c8c8c;
}
.smooth::-webkit-slider-thumb {
  appearance: none;
  width: 12px;
  height: 22px;
  margin-top: -8px;
  border: 1px solid #d3d3d3;
  background: linear-gradient(#fafafa, #e6e6e6);
}
.bars {
  display: flex;
  align-items: center;
  justify-content: center;
  width: 44px;
  height: 22px;
  margin-left: auto;
  background: #9bb8ff;
}
.series { margin-left: 10px; }
.hr, .speed { fill: none; stroke-width: 3; stroke-linejoin: round; }
.hr { stroke: #ff665c; }
.speed { stroke: #4fa748; }
.axis { fill: none; stroke: #8c8c8c; }
.chart-art text { font-size: 11px; dominant-baseline: central; }
.y-pace { fill: #128a1b; text-anchor: end; }
.y-hr { fill: #e8190c; }
.chart-art .x-km text { font-size: 9px; font-weight: 500; text-anchor: middle; }

/* right column */
aside {
  flex: none;
  display: flex;
  flex-direction: column;
  width: 323px;
}
.pane { display: flex; }
.stats-pane { height: 362px; }
.stats { flex: 1; min-width: 0; overflow: hidden; }
.stats h2 {
  height: 46px;
  padding-top: 4px;
  font-size: 20px;
  line-height: 48px;
  font-weight: 200;
  text-align: center;
}
.totals {
  display: grid;
  grid-template-columns: 104px 104px 66px;
  padding: 19px 0 0 18px;
  background: radial-gradient(ellipse at top, rgba(0,0,0,0.15), transparent 60%) center top / 100% 6px no-repeat;
  text-align: center;
}
.totals span { display: block; line-height: 16px; }
.totals strong {
  display: block;
  font-size: 26px;
  line-height: 24px;
  font-weight: 200;
}
.totals small { margin-left: 5px; font-size: 14px; font-weight: 400; }
table { border-collapse: collapse; font-size: 12px; }
th { font-weight: 400; }
.facts {
  width: 311px;
  table-layout: fixed;
  margin-top: 13px;
  line-height: 21px;
}
.facts th, .facts td { padding: 0 10px; white-space: nowrap; font-size: 11px; }
.facts th { width: 79px; text-align: right; border-right: 1px solid #bcc4d4; }
.facts th:nth-child(3) { width: 83px; }
.facts td:last-child { width: 69px; padding-right: 0; }
.facts small { font-size: 10px; }
.facts .tiny { font-size: 7px; }
.stats hr {
  margin: 19px 10px 13px;
  border: none;
  border-top: 1px solid #bcc4d4;
}
.ranges { width: 311px; table-layout: fixed; text-align: center; }
.ranges th, .ranges td { padding: 0; width: 54px; height: 25px; }
.ranges thead td:first-child, .ranges tbody th { width: 79px; }
.ranges tbody th {
  padding-right: 10px;
  text-align: right;
  font-size: 11px;
  border-right: 1px solid #bcc4d4;
}
.ranges thead td:last-child { width: auto; }
.ranges tbody td:last-child {
  width: auto;
  padding-left: 8px;
  text-align: left;
  font-size: 10px;
  border-left: 1px solid #bcc4d4;
}
.ranges thead th { font-size: 11px; }

.laps-pane { flex: 1; min-height: 0; }
.laps {
  flex: 1;
  display: flex;
  flex-direction: column;
  padding-top: 15px;
}
.tabs {
  display: flex;
  gap: 10px;
  padding-left: 34px;
}
.tabs button {
  position: relative;
  width: 36px;
  height: 36px;
  padding: 6px;
  border-radius: 4px;
}
.tabs .on { background: #ededed; }
.count {
  position: absolute;
  right: -3px;
  top: 0;
  width: 17px;
  border-radius: 9px;
  background: #1a40ed;
  color: #fff;
  font-size: 10px;
  line-height: 16px;
}
.laps h3 {
  padding-left: 24px;
  font-size: 16px;
  line-height: 36px;
  font-weight: 400;
  text-align: center;
}
.lap {
  flex: 1;
  display: flex;
  align-items: center;
  padding-left: 10px;
  font-size: 14px;
}
.lap label {
  display: flex;
  gap: 9px;
  width: 166px;
  font-size: 12px;
  line-height: 16px;
}
.lap label span { padding-top: 2px; }
.whole {
  flex: none;
  height: 31px;
  padding-top: 3px;
  border-bottom: 1px solid #bcc4d4;
}
.lap-list {
  flex: 1;
  display: flex;
  flex-direction: column;
  padding-top: 6px;
}

footer {
  display: flex;
  align-items: center;
  height: 57px;
  padding: 0 16px 0 10px;
  border-top: 1px solid #dfe0e6;
}
.public { display: flex; align-items: center; gap: 3px; padding-top: 10px; }
.share { display: flex; gap: 5px; margin: 7px 0 0 7px; }
.share a {
  display: flex;
  align-items: center;
  justify-content: center;
  width: 21px;
  height: 21px;
}
.tw { background: #8dcdf2; }
.fb, .ln { background: #97b9d3; }
.ml { background: #97d6c4; }
.footer-buttons {
  display: flex;
  align-items: center;
  gap: 38px;
  margin-left: auto;
  font-size: 14px;
  color: #1a40ed;
}
.footer-buttons .primary {
  width: 117px;
  height: 32px;
  margin-left: -15px;
  border-radius: 3px;
  background: #1a40ed;
  color: #fff;
}
```
